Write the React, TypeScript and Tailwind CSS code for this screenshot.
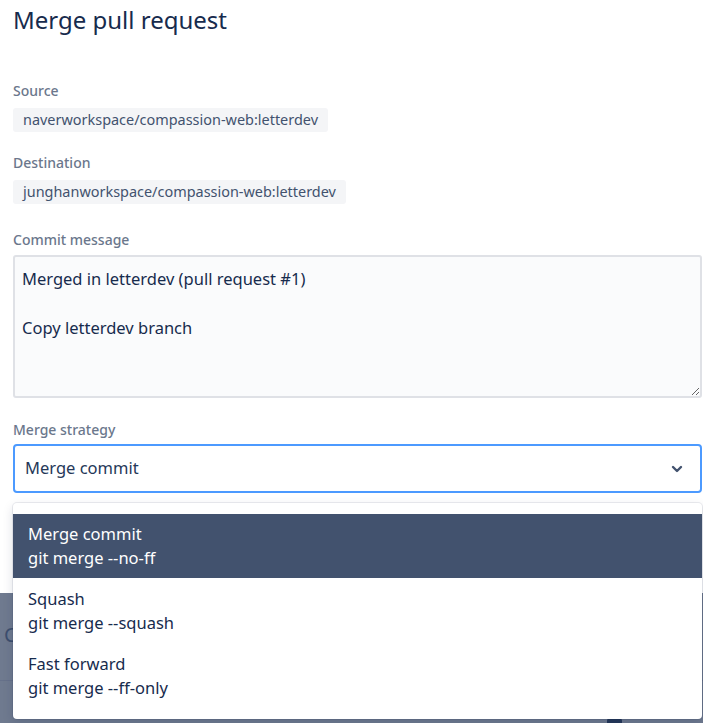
import React from "react";

const font = { fontFamily: '"Noto Sans", "Open Sans", sans-serif' };

const strategies = [
  { name: "Merge commit", cmd: "git merge --no-ff" },
  { name: "Squash", cmd: "git merge --squash" },
  { name: "Fast forward", cmd: "git merge --ff-only" },
];

function Label({ children }: { children: React.ReactNode }) {
  return (
    <div className="text-[14px] leading-[20px] font-medium text-[#6b778c]">
      {children}
    </div>
  );
}

function Chip({ children }: { children: React.ReactNode }) {
  return (
    <div className="mt-[7px] flex">
      <div className="flex h-[24px] items-center rounded-[3px] bg-[#f4f5f7] px-[10px] text-[14.45px] text-[#42526e]">
        {children}
      </div>
    </div>
  );
}

function ChevronDown() {
  return (
    <svg width="12" height="8" viewBox="0 0 12 8" fill="none">
      <path
        d="M2 2l4 4 4-4"
        stroke="#42526e"
        strokeWidth="2.4"
        strokeLinecap="round"
        strokeLinejoin="round"
      />
    </svg>
  );
}

function StrategyMenu() {
  const selected = 0;
  return (
    <div className="absolute left-0 right-0 top-[59px] z-10 rounded-[4px] bg-white py-[11px] shadow-[0_0_0_1px_rgba(9,30,66,0.08),0_4px_11px_rgba(9,30,66,0.15)]">
      {strategies.map((s, i) => (
        <div
          key={s.name}
          className={
            i === selected
              ? "flex h-[64px] flex-col justify-center bg-[#42526e] px-[15px] text-white"
              : "flex h-[65px] flex-col justify-center px-[15px] text-[#172b4d]"
          }
        >
          <div className="text-[16.5px] leading-[24px]">{s.name}</div>
          <div className="text-[16.5px] leading-[24px]">{s.cmd}</div>
        </div>
      ))}
    </div>
  );
}

export default function App() {
  return (
    <div className="flex h-[723px] w-[703px] flex-col overflow-hidden" style={font}>
      {/* Modal body */}
      <div className="h-[593px] bg-white pl-[13px] pr-[1px]">
        <h1 className="pt-[4px] text-[24px] leading-[32px] font-normal text-[#172b4d]">
          Merge pull request
        </h1>

        <div className="mt-[45px]">
          <Label>Source</Label>
          <Chip>naverworkspace/compassion-web:letterdev</Chip>
        </div>

        <div className="mt-[21px]">
          <Label>Destination</Label>
          <Chip>junghanworkspace/compassion-web:letterdev</Chip>
        </div>

        <div className="mt-[26px]">
          <Label>Commit message</Label>
          <textarea
            readOnly
            defaultValue={"Merged in letterdev (pull request #1)\n\nCopy letterdev branch"}
            className="mt-[5px] block h-[143px] w-full rounded-[3px] border-2 border-[#dfe1e6] bg-[#fafbfc] px-[7px] py-[10px] text-[16.5px] leading-[24.5px] text-[#172b4d] outline-none"
            style={font}
          />
        </div>

        <div className="mt-[22px]">
          <Label>Merge strategy</Label>
          <div className="relative mt-[4px]">
            <div className="flex h-[49px] items-center justify-between rounded-[4px] border-2 border-[#4c9aff] bg-white pl-[10px] pr-[17px] text-[16.5px] text-[#253858]">
              <span>Merge commit</span>
              <ChevronDown />
            </div>
            <StrategyMenu />
          </div>
        </div>
      </div>

      {/* Dimmed page behind the modal */}
      <div className="relative flex-1 bg-[#6f7a8f]">
        <div className="absolute left-[4px] top-[28px] text-[20px] leading-[28px] text-[#3d4f6e]">
          C
        </div>
        <div className="absolute left-0 right-0 top-[87px] h-px bg-[#66718a]" />
        <div className="absolute left-[607px] top-[125px] h-[8px] w-[15px] rounded-[3px] bg-[#253858]" />
      </div>
    </div>
  );
}
